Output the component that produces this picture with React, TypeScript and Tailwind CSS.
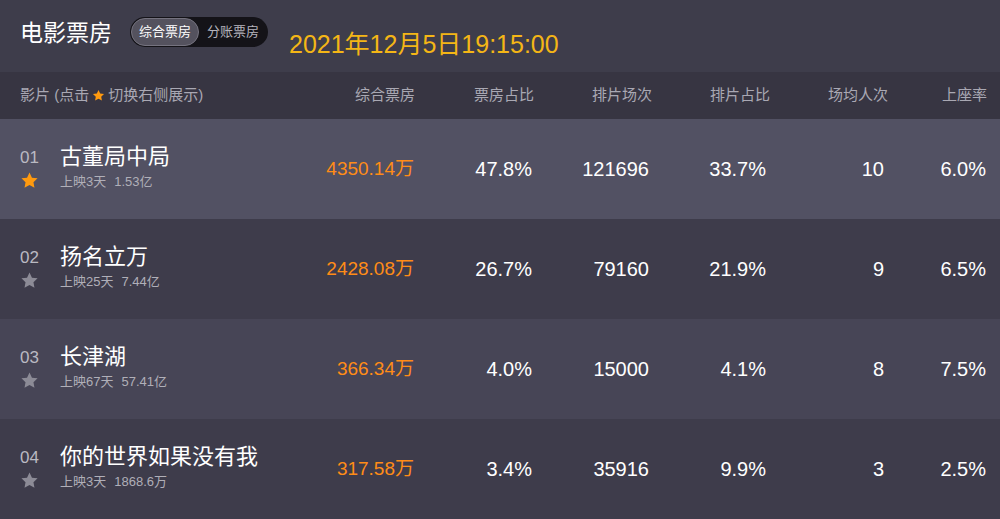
import React from "react";

const FONT = { fontFamily: '"Liberation Sans", Arial, "Noto Sans CJK SC", sans-serif' };

function Star({ className }: { className: string }) {
  return (
    <svg viewBox="0 0 24 24" className={className} fill="currentColor">
      <path d="M12 1.8l3.1 6.6 7.1.9-5.2 4.9 1.3 7.1L12 17.8l-6.3 3.5 1.3-7.1-5.2-4.9 7.1-.9z" />
    </svg>
  );
}

const rows = [
  { rank: "01", name: "古董局中局", days: "上映3天", total: "1.53亿", box: "4350.14万", boxPct: "47.8%", shows: "121696", showPct: "33.7%", avg: "10", seat: "6.0%", bg: "bg-[#525163]", active: true },
  { rank: "02", name: "扬名立万", days: "上映25天", total: "7.44亿", box: "2428.08万", boxPct: "26.7%", shows: "79160", showPct: "21.9%", avg: "9", seat: "6.5%", bg: "bg-[#3e3c4b]", active: false },
  { rank: "03", name: "长津湖", days: "上映67天", total: "57.41亿", box: "366.34万", boxPct: "4.0%", shows: "15000", showPct: "4.1%", avg: "8", seat: "7.5%", bg: "bg-[#474556]", active: false },
  { rank: "04", name: "你的世界如果没有我", days: "上映3天", total: "1868.6万", box: "317.58万", boxPct: "3.4%", shows: "35916", showPct: "9.9%", avg: "3", seat: "2.5%", bg: "bg-[#3e3c4b]", active: false },
];

const GRID7 = "grid grid-cols-[1fr_118px_118px_117px_117px_118px_102px] pr-[14px] items-center";

export default function App() {
  return (
    <div className="w-[1000px] h-[519px] overflow-hidden bg-[#3e3c4b] text-white" style={FONT}>
      {/* Top bar */}
      <div className="h-[72px] bg-[#3e3d4b] flex items-start pl-[20px]">
        <div className="text-[23px] leading-none mt-[20px] text-white" style={{ fontFamily: '"Noto Sans CJK SC", sans-serif' }}>电影票房</div>
        <div className="ml-[18px] mt-[17px] h-[30px] w-[138px] rounded-full bg-[#141318] flex items-center p-[1px]">
          <div className="h-[28px] w-[68px] rounded-full bg-[#54525e] border border-[#75737f] flex items-center justify-center text-[13px] text-white">
            综合票房
          </div>
          <div className="flex-1 flex items-center justify-center text-[13px] text-[#b5b4bd]">分账票房</div>
        </div>
        <div className="ml-[21px] mt-[32px] text-[25px] leading-none text-[#f4b616]">2021年12月5日19:15:00</div>
      </div>

      {/* Column header */}
      <div className={`${GRID7} h-[47px] bg-[#373542] text-[15px] text-[#a9a8b3]`}>
        <div className="pl-[20px] flex items-center">
          影片 (点击
          <Star className="w-[13px] h-[13px] text-[#ff9a0f] mx-[3px]" />
          切换右侧展示)
        </div>
        <div className="text-right mr-[-1px]">综合票房</div>
        <div className="text-right mr-[-2px]">票房占比</div>
        <div className="text-right mr-[-3px]">排片场次</div>
        <div className="text-right mr-[-4px]">排片占比</div>
        <div className="text-right mr-[-4px]">场均人次</div>
        <div className="text-right mr-[-1px]">上座率</div>
      </div>

      {rows.map((r) => (
        <div key={r.rank} className={`${GRID7} h-[100px] ${r.bg} text-[20px]`}>
          <div className="pl-[20px] flex items-center">
            <div className="w-[40px] flex flex-col items-start">
              <div className="text-[17px] leading-[20px] text-[#bab9c2]">{r.rank}</div>
              <Star className={`w-[19px] h-[19px] mt-[3px] ${r.active ? "text-[#ff9a0f]" : "text-[#8c8b96]"}`} />
            </div>
            <div className="flex flex-col">
              <div className="text-[22px] leading-[26px] text-white mt-[-6px]" style={{ fontFamily: '"Noto Sans CJK SC", sans-serif' }}>{r.name}</div>
              <div className="text-[13px] leading-[18px] text-[#b0afb8] mt-[6px]">
                {r.days}
                <span className="ml-[8px]">{r.total}</span>
              </div>
            </div>
          </div>
          <div className="text-right text-[19px] text-[#ff8c17]">{r.box}</div>
          <div className="text-right">{r.boxPct}</div>
          <div className="text-right">{r.shows}</div>
          <div className="text-right">{r.showPct}</div>
          <div className="text-right">{r.avg}</div>
          <div className="text-right">{r.seat}</div>
        </div>
      ))}
    </div>
  );
}
